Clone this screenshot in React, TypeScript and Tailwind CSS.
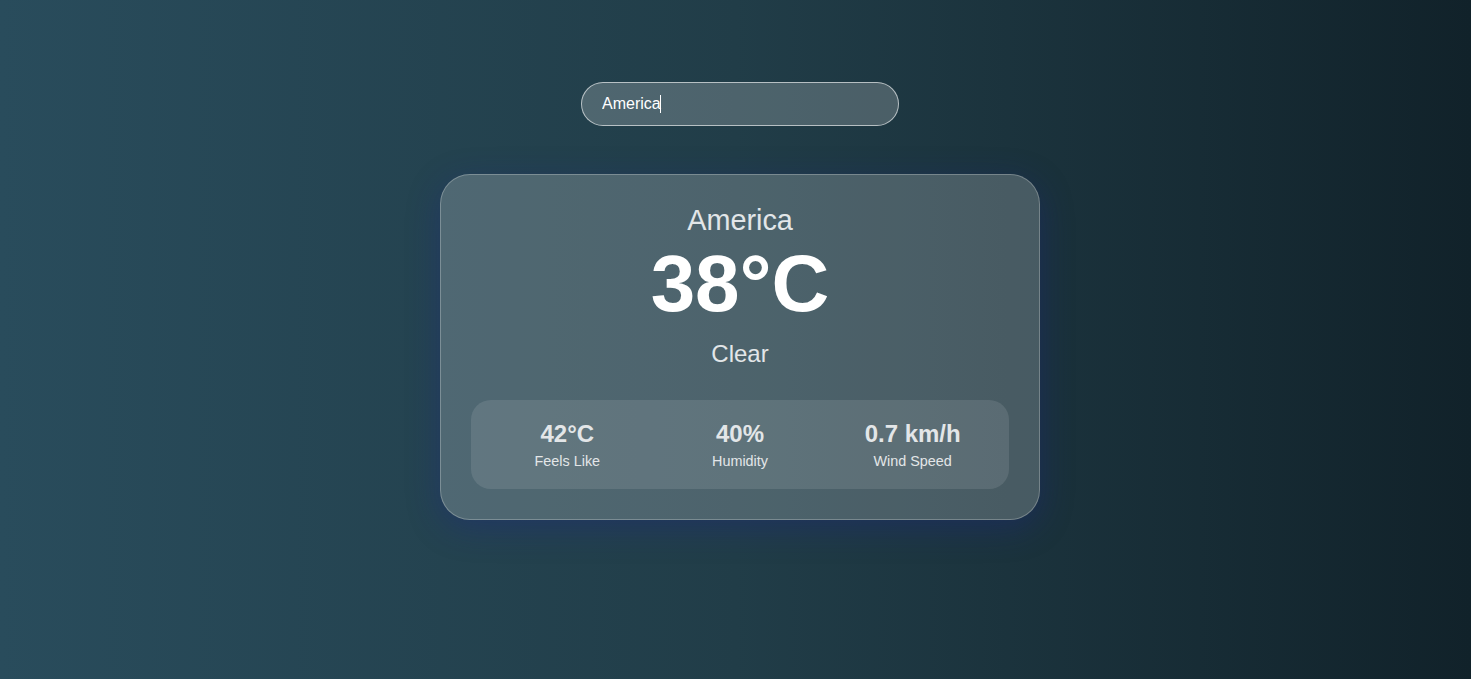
import React from "react";

export default function App() {
  const font = { fontFamily: '"Liberation Sans", Arial, sans-serif' };
  return (
    <div
      className="min-h-[679px] w-full flex flex-col items-center pt-[82px] pl-[9px] bg-[linear-gradient(to_right,#294c5c_0%,#213d48_50%,#11222a_100%)]"
      style={font}
    >
      <div className="relative">
        <input
          defaultValue="America"
          className="w-[318px] h-[44px] rounded-full bg-white/20 border border-white/60 pl-[20px] pr-4 text-[16px] text-white outline-none caret-white"
        />
        <span className="pointer-events-none absolute left-[79px] top-[13px] h-[18px] w-px bg-white" />
      </div>
      <div className="mt-[48px] w-[600px] rounded-[30px] border border-white/25 bg-white/20 p-[30px] text-center shadow-[0_8px_32px_0_rgba(31,38,135,0.37)]">
        <h2 className="text-[28.8px] leading-[30px] text-[#e2e6e8]">America</h2>
        <div className="mt-[9px] text-[80px] leading-[80px] font-bold text-white">38°C</div>
        <div className="mt-[16px] text-[24px] leading-[28px] text-[#e2e6e8]">Clear</div>
        <div className="mt-[32px] grid grid-cols-3 rounded-[20px] bg-white/10 px-[10px] pt-[21px] pb-[19px]">
          {[
            ["42°C", "Feels Like"],
            ["40%", "Humidity"],
            ["0.7 km/h", "Wind Speed"],
          ].map(([v, l]) => (
            <div key={l} className="flex flex-col items-center">
              <div className="text-[24px] leading-[26px] font-bold text-[#e3e6e8]">{v}</div>
              <div className="mt-[6px] text-[14.4px] leading-[17px] text-[#e3e6e8]">{l}</div>
            </div>
          ))}
        </div>
      </div>
    </div>
  );
}
